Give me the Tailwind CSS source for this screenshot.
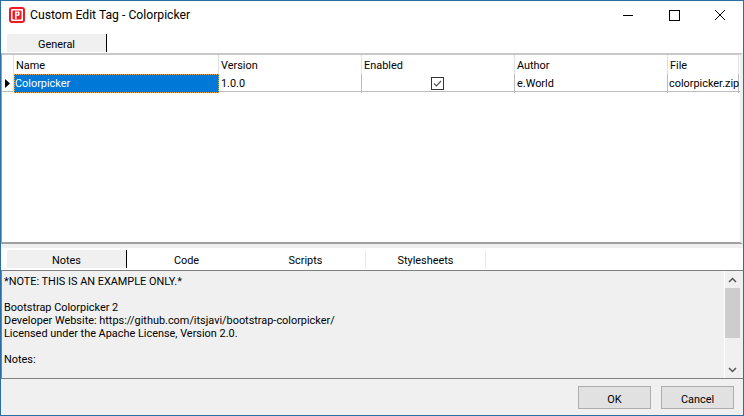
<!DOCTYPE html>
<html lang="en">

<head>
  <meta charset="UTF-8">
  <title>Custom Edit Tag - Colorpicker</title>
  <script src="https://cdn.jsdelivr.net/npm/@tailwindcss/browser@4"></script>
</head>

<body class="w-[744px] h-[416px] overflow-hidden font-['Roboto','Noto_Sans',sans-serif] text-[10.9px] text-black">
  <div class="w-[744px] h-[416px] flex flex-col border border-[#2b6ea6] bg-white">

    <!-- Title bar -->
    <div class="h-[31px] flex items-center pb-[3px] shrink-0 bg-white">
      <svg class="ml-[8px] w-[16px] h-[16px]" viewBox="0 0 16 16">
        <rect x="0" y="0" width="16" height="16" rx="3" fill="#f01a24" />
        <rect x="2" y="2" width="12" height="12" rx="1" fill="#fff" />
        <rect x="3.5" y="3.5" width="9" height="9" rx="1" fill="#f01a24" />
        <path d="M6 12V4.5h3.6a1 1 0 0 1 1 1v2.2a1 1 0 0 1-1 1H7.6V12z" fill="#fff" />
        <rect x="7.6" y="5.8" width="1.4" height="1.6" fill="#f01a24" />
      </svg>
      <span class="ml-[5px] text-[12.2px]">Custom Edit Tag - Colorpicker</span>
      <div class="ml-auto flex items-center">
        <svg class="w-[46px] h-[14px]" viewBox="0 0 46 14"><path d="M18 7.5h10" stroke="#000" fill="none" /></svg>
        <svg class="w-[46px] h-[14px]" viewBox="0 0 46 14"><rect x="18.5" y="2.5" width="10" height="10" stroke="#000" fill="none" /></svg>
        <svg class="w-[46px] h-[14px]" viewBox="0 0 46 14"><path d="M18 2l10 10M28 2L18 12" stroke="#000" fill="none" /></svg>
      </div>
    </div>

    <!-- Top tabs -->
    <div class="h-[21px] flex pl-[6px] pt-[2px] shrink-0">
      <div class="w-[99px] h-[18px] pt-[4px] bg-[#f0f0f0] flex items-center justify-center">General</div>
      <div class="w-px h-[18px] bg-black"></div>
    </div>

    <!-- Grid -->
    <div class="h-[191px] shrink-0 border-y-2 border-t-[#c8c8c8] border-b-[#a0a0a0] border-l border-l-[#a0a0a0] border-r-[3px] border-r-[#f0f0f0] bg-white">
      <div class="grid grid-cols-[12px_205px_143px_153px_153px_71px] h-[19px] items-center">
        <div class="h-full border-r border-[#e0e0e0]"></div>
        <div class="h-full pt-[3px] flex items-center pl-[2px] border-r border-[#e0e0e0]">Name</div>
        <div class="h-full pt-[3px] flex items-center pl-[2px] border-r border-[#e0e0e0]">Version</div>
        <div class="h-full pt-[3px] flex items-center pl-[2px] border-r border-[#e0e0e0]">Enabled</div>
        <div class="h-full pt-[3px] flex items-center pl-[2px] border-r border-[#e0e0e0]">Author</div>
        <div class="h-full pt-[3px] flex items-center pl-[2px] border-r border-[#e0e0e0]">File</div>
      </div>
      <div class="grid grid-cols-[12px_205px_143px_153px_153px_71px] h-[18px] border-b border-[#bcbcbc] items-center">
        <div class="h-full flex items-center justify-center border-r border-[#e0e0e0]">
          <svg class="w-[5px] h-[9px]" viewBox="0 0 5 9"><path d="M0 0l5 4.5L0 9z" fill="#000" /></svg>
        </div>
        <div class="h-full flex items-center pt-[1px] bg-[#0078d7] text-white border border-dotted border-[#e8a33d]">Colorpicker</div>
        <div class="h-full flex items-center pt-[1px] pl-[2px] border-r border-[#bcbcbc]">1.0.0</div>
        <div class="h-full flex items-center justify-center pr-[2px] border-r border-[#bcbcbc]">
          <svg class="w-[13px] h-[13px]" viewBox="0 0 13 13">
            <rect x="0.5" y="0.5" width="12" height="12" fill="#fff" stroke="#333" />
            <path d="M3 6.5l2.5 2.5L10 4" stroke="#555" stroke-width="1.2" fill="none" />
          </svg>
        </div>
        <div class="h-full flex items-center pt-[1px] pl-[2px] border-r border-[#bcbcbc]">e.World</div>
        <div class="h-full flex items-center pt-[1px] pl-[1px] border-r border-[#bcbcbc]">colorpicker.zip</div>
      </div>
    </div>

    <!-- Bottom tabs -->
    <div class="h-[26px] shrink-0 bg-[#f0f0f0] pt-[4px]">
      <div class="h-[22px] bg-white flex items-start pl-[6px] pt-[2px]">
        <div class="w-[119px] h-[18px] pt-[4px] bg-[#f0f0f0] flex items-center justify-center">Notes</div>
        <div class="w-[120px] h-[18px] pt-[4px] border-l border-black flex items-center justify-center">Code</div>
        <div class="w-[120px] h-[18px] pt-[4px] border-r border-[#e8e8e8] flex items-center justify-center">Scripts</div>
        <div class="w-[120px] h-[18px] pt-[4px] border-r border-[#e8e8e8] flex items-center justify-center">Stylesheets</div>
      </div>
    </div>

    <!-- Notes -->
    <div class="h-[109px] shrink-0 flex border-y border-[#808080] border-l border-l-[#808080] bg-[#f0f0f0]">
      <div class="flex-1 pl-[2px] pt-[4px] leading-[13px]">
        <p>*NOTE: THIS IS AN EXAMPLE ONLY.*</p>
        <p class="mt-[13px]">Bootstrap Colorpicker 2</p>
        <p>Developer Website: https://github.com/itsjavi/bootstrap-colorpicker/</p>
        <p>Licensed under the Apache License, Version 2.0.</p>
        <p class="mt-[13px]">Notes:</p>
      </div>
      <div class="w-[16px] mr-[3px] flex flex-col items-center bg-[#f0f0f0] border-l border-white">
        <div class="h-[17px] flex items-center justify-center">
          <svg class="w-[9px] h-[6px]" viewBox="0 0 9 6"><path d="M1 5l3.5-3.5L8 5" stroke="#555" stroke-width="1.5" fill="none" /></svg>
        </div>
        <div class="w-full h-[50px] bg-[#cdcdcd]"></div>
        <div class="flex-1 flex items-end justify-center pb-[5px]">
          <svg class="w-[9px] h-[6px]" viewBox="0 0 9 6"><path d="M1 1l3.5 3.5L8 1" stroke="#555" stroke-width="1.5" fill="none" /></svg>
        </div>
      </div>
    </div>

    <!-- Buttons -->
    <div class="flex-1 bg-[#f0f0f0] flex justify-end items-start pt-[7px] pr-[9px] gap-[10px]">
      <button class="w-[73px] h-[23px] pt-[5px] bg-[#e1e1e1] border border-[#adadad]">OK</button>
      <button class="w-[73px] h-[23px] pt-[5px] bg-[#e1e1e1] border border-[#adadad]">Cancel</button>
    </div>
  </div>
</body>

</html>
